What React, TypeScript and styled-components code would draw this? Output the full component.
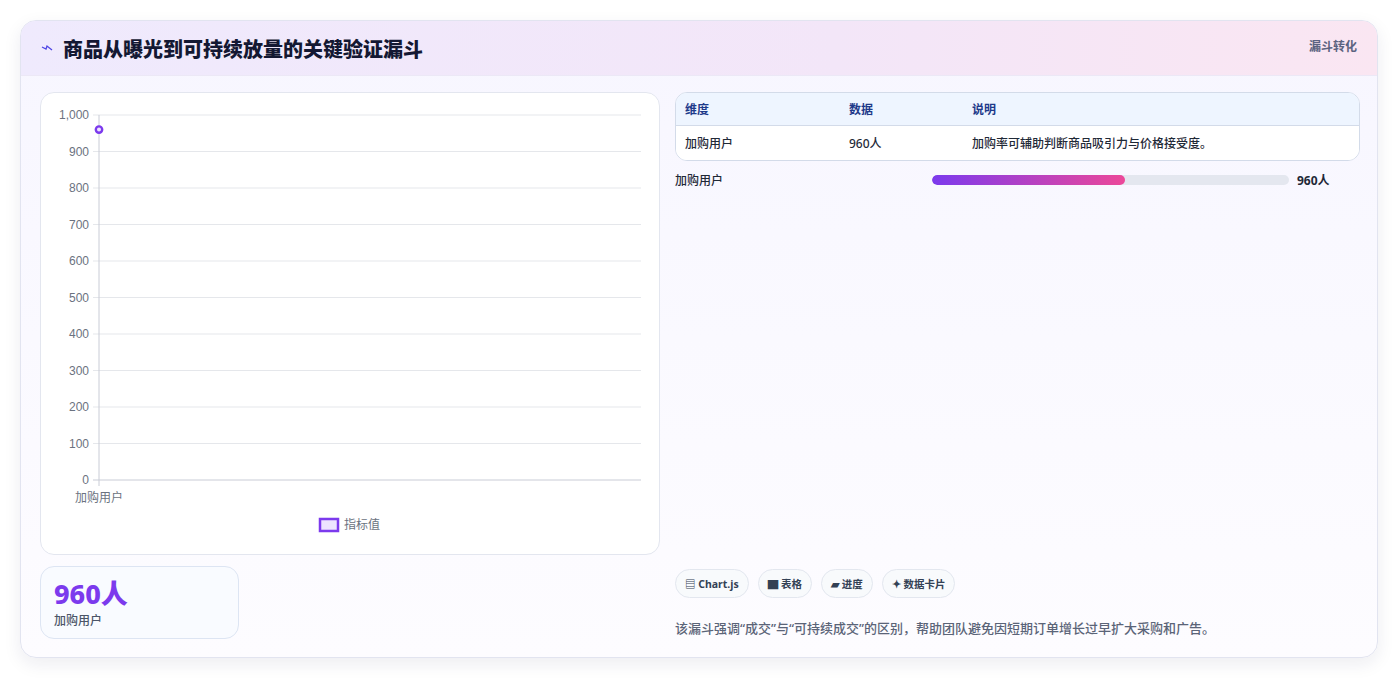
import React from "react";
import styled, { createGlobalStyle } from "styled-components";

const Global = createGlobalStyle`
  html,body{margin:0;padding:0;background:#f3f4f6;}
  body{font-family:"Noto Sans","Noto Sans CJK SC",sans-serif;}
  *{box-sizing:border-box;}
`;
const Page = styled.div`
  background:#fff; padding:20px 21px 21px 20px; height:679px;
`;
const Card = styled.div`
  border:1px solid #e2e4f0; border-radius:16px; overflow:hidden; height:638px;
  background:linear-gradient(180deg,#f7f6ff 0%,#fdfcff 100%);
  box-shadow:0 6px 18px rgba(30,30,80,0.08);
  display:flex; flex-direction:column;
`;
const Header = styled.div`
  height:55px; flex:none; display:flex; align-items:center; justify-content:space-between;
  padding:0 20px 0 20px;
  background:linear-gradient(90deg,#efeafd 0%,#f3e6f8 60%,#fae6f2 100%);
  border-bottom:1px solid #ece8f6;
`;
const Title = styled.h1`
  margin:0; font-size:20px; font-weight:800; color:#141833; display:flex; align-items:center; gap:10px;
  font-family:"Noto Sans CJK SC",sans-serif;
`;
const Tag = styled.span`
  font-size:12px; font-weight:700; color:#5b6380; align-self:flex-start; margin-top:16px;
`;
const Body = styled.div`
  flex:1; display:grid; grid-template-columns:620px 685px; gap:15px; padding:16px 18px 18px 19px;
`;
const Col = styled.div`display:flex; flex-direction:column; gap:11px;`;
const ChartBox = styled.div`
  background:#fff; border:1px solid #e3e6ef; border-radius:14px; height:463px; position:relative;
`;
const Kpi = styled.div`
  width:199px; height:73px; border:1px solid #dde5f3; border-radius:14px; background:#f9fbff;
  padding:10px 13px;
`;
const KpiVal = styled.div`font-size:27px; font-weight:800; color:#7c3aed; line-height:34px;`;
const KpiLbl = styled.div`font-size:12px; color:#4b5568; font-weight:500;`;
const Table = styled.div`
  border:1px solid #d3dbe9; border-radius:12px; overflow:hidden; background:#fff;
`;
const Row = styled.div<{ $head?: boolean }>`
  display:grid; grid-template-columns:164px 123px 1fr; height:${p => p.$head ? 33 : 34}px; align-items:center;
  padding:0 9px; font-size:12px; font-weight:${p => p.$head ? 700 : 500};
  color:${p => p.$head ? "#1e3a8a" : "#1f2937"};
  background:${p => p.$head ? "#eef5ff" : "#fff"};
  border-bottom:${p => p.$head ? "1px solid #d3dbe9" : "none"};
`;
const BarRow = styled.div`
  display:grid; grid-template-columns:257px 357px 1fr; align-items:center; font-size:12px; font-weight:500; color:#1f2937;
  margin-top:2px; gap:0;
`;
const Track = styled.div`height:10px; border-radius:5px; background:#e4e7ef; overflow:hidden;`;
const Fill = styled.div`height:100%; border-radius:5px; background:linear-gradient(90deg,#7c3aed,#ec4899);`;
const BarVal = styled.span`font-weight:700; padding-left:8px;`;
const Spacer = styled.div`flex:1;`;
const Chips = styled.div`display:flex; gap:9px;`;
const Chip = styled.span`
  height:29px; padding:0 9px; border:1px solid #e3e7ef; border-radius:15px; background:#f8fafc;
  font-size:10.5px; font-weight:700; color:#334155; display:flex; align-items:center; gap:3px;
`;
const Note = styled.p`margin:12px 0 2px; font-size:13px; color:#5b6478; font-weight:500;`;

const ticks = [1000, 900, 800, 700, 600, 500, 400, 300, 200, 100, 0];

function Chart() {
  const top = 22, bottom = 387, left = 58, right = 600;
  const step = (bottom - top) / 10;
  return (
    <svg width="619" height="461" style={{ display: "block" }}>
      {ticks.map((t, i) => {
        const y = top + i * step;
        return (
          <g key={t}>
            <line x1={left - 6} x2={right} y1={y} y2={y} stroke={i === 10 ? "#c9ccd6" : "#e5e7eb"} />
            <text x={left - 10} y={y + 4} textAnchor="end" fontSize="12" fill="#6b7280" fontFamily="Liberation Sans, sans-serif">{t.toLocaleString("en-US")}</text>
          </g>
        );
      })}
      <line x1={left} x2={left} y1={top} y2={bottom + 6} stroke="#c9ccd6" />
      <circle cx={left} cy={top + (bottom - top) * 0.04} r="3.2" fill="#ede4ff" stroke="#7c3aed" strokeWidth="2.4" />
      <text x={left} y={409} textAnchor="middle" fontSize="12" fill="#6b7280" fontFamily="Noto Sans CJK SC, sans-serif">加购用户</text>
      <rect x="279" y="426" width="18" height="12" fill="#ede4ff" stroke="#7c3aed" strokeWidth="2.5" />
      <text x="303" y="436" fontSize="12" fill="#6b7280" fontFamily="Noto Sans CJK SC, sans-serif">指标值</text>
    </svg>
  );
}

export default function App() {
  return (
    <>
      <Global />
      <Page>
        <Card>
          <Header>
            <Title>
              <svg width="12" height="12" viewBox="0 0 12 12"><path d="M1 5 L5 7 L6 4 L11 8" stroke="#4f46e5" strokeWidth="1.3" fill="none" /></svg>
              商品从曝光到可持续放量的关键验证漏斗
            </Title>
            <Tag>漏斗转化</Tag>
          </Header>
          <Body>
            <Col>
              <ChartBox><Chart /></ChartBox>
              <Kpi>
                <KpiVal>960人</KpiVal>
                <KpiLbl>加购用户</KpiLbl>
              </Kpi>
            </Col>
            <Col style={{ gap: 8 }}>
              <Table>
                <Row $head><span>维度</span><span>数据</span><span>说明</span></Row>
                <Row><span>加购用户</span><span>960人</span><span>加购率可辅助判断商品吸引力与价格接受度。</span></Row>
              </Table>
              <BarRow>
                <span>加购用户</span>
                <Track><Fill style={{ width: "54%" }} /></Track>
                <BarVal>960人</BarVal>
              </BarRow>
              <Spacer />
              <Chips>
                <Chip>▤ Chart.js</Chip>
                <Chip>▇ 表格</Chip>
                <Chip>▰ 进度</Chip>
                <Chip>✦ 数据卡片</Chip>
              </Chips>
              <Note>该漏斗强调“成交”与“可持续成交”的区别，帮助团队避免因短期订单增长过早扩大采购和广告。</Note>
            </Col>
          </Body>
        </Card>
      </Page>
    </>
  );
}
